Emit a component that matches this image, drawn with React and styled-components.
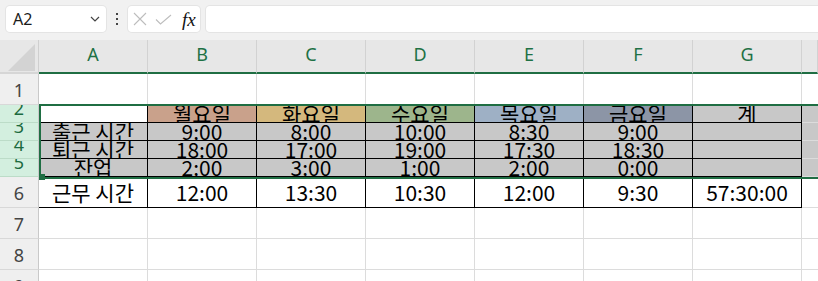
import React from 'react';
import styled, { createGlobalStyle } from 'styled-components';

const GlobalStyle = createGlobalStyle`
  html, body { margin: 0; padding: 0; background: #fff; overflow: hidden; }
  body { font-family: "Noto Sans", "Noto Sans CJK KR", sans-serif; }
`;

const Page = styled.div`
  width: 818px;
  height: 281px;
  overflow: hidden;
  background: #fff;
`;

const Toolbar = styled.div`
  height: 40px;
  box-sizing: border-box;
  display: flex;
  align-items: flex-start;
  padding: 6px 0 0 6px;
  background: #f1f1f1;
`;

const Box = styled.div`
  height: 26px;
  box-sizing: border-box;
  background: #fff;
  border-radius: 4px;
  box-shadow: 0 0 0 1px #e4e4e4;
  display: flex;
  align-items: center;
`;

const NameBox = styled(Box)`
  width: 100px;
  padding: 0 6px 0 7px;
  justify-content: space-between;
  font-size: 16px;
  color: #1b1b1b;
`;

const Dots = styled.div`
  width: 22px;
  height: 26px;
  display: flex;
  flex-direction: column;
  align-items: center;
  justify-content: center;
  gap: 3px;
  & > i {
    display: block;
    width: 2px;
    height: 2px;
    background: #444;
  }
`;

const FxGroup = styled(Box)`
  width: 72px;
  padding: 0 0 0 5px;
  gap: 8px;
`;

const Fx = styled.span`
  font-family: "Liberation Serif", serif;
  font-style: italic;
  font-size: 19px;
  color: #111;
  margin-left: 2px;
  line-height: 1;
`;

const FormulaInput = styled(Box)`
  flex: 1;
  margin-left: 6px;
  margin-right: -8px;
`;

const SheetWrap = styled.div`
  position: relative;
`;

const Grid = styled.div`
  display: grid;
  grid-template-columns: 39px repeat(7, 109px) 16px;
  grid-template-rows: 34px 31px 18px 18px 18px 18px 31px 31px 31px 31px;
`;

const Corner = styled.div`
  position: relative;
  background: #e7e7e7;
  border-right: 1px solid #cfcfcf;
  border-bottom: 2px solid #d6d6d6;
  box-sizing: border-box;
  &::after {
    content: "";
    position: absolute;
    right: 3px;
    bottom: 1px;
    width: 0;
    height: 0;
    border-left: 27px solid transparent;
    border-bottom: 27px solid #d3d3d3;
  }
`;

const ColHeader = styled.div`
  box-sizing: border-box;
  background: #e7e7e7;
  border-right: 1px solid #d2d2d2;
  border-bottom: 2px solid #1f6e43;
  color: #1e7145;
  font-size: 18px;
  display: flex;
  align-items: center;
  justify-content: center;
  padding-bottom: 4px;
`;

const RowHeader = styled.div`
  box-sizing: border-box;
  background: ${(p) => (p.$sel ? '#d3efdf' : '#efefef')};
  color: ${(p) => (p.$sel ? '#1c6b40' : '#444')};
  border-right: 1px solid #c9c9c9;
  border-bottom: 1px solid ${(p) => (p.$sel ? '#bcdcc8' : '#d8d8d8')};
  display: flex;
  align-items: flex-end;
  justify-content: center;
  overflow: hidden;
  & > span {
    display: block;
    height: 27px;
    line-height: 27px;
    font-size: 18px;
    flex: none;
  }
`;

const Cell = styled.div`
  box-sizing: border-box;
  background: ${(p) => p.$fill || '#fff'};
  border-right: ${(p) => (p.$noRight ? 'none' : `1px solid ${p.$r || '#dcdcdc'}`)};
  border-bottom: 1px solid ${(p) => p.$b || '#dcdcdc'};
  display: flex;
  align-items: center;
  justify-content: center;
  overflow: hidden;
  white-space: nowrap;
  font-family: "Noto Sans CJK KR", "Noto Sans", sans-serif;
  font-size: 21px;
  line-height: 1;
  color: #000;
`;

const Selection = styled.div`
  position: absolute;
  left: 39px;
  top: 64px;
  right: -4px;
  height: 75px;
  box-sizing: border-box;
  border: 2px solid #1f6e43;
  pointer-events: none;
`;

const Handle = styled.div`
  position: absolute;
  left: -2px;
  bottom: -3px;
  width: 6px;
  height: 6px;
  background: #1f6e43;
`;

const GRAY = '#c8c8c8';
const BLACK = '#000';
const cols = ['A', 'B', 'C', 'D', 'E', 'F', 'G'];
const days = [
  ['월요일', '#c9a18b'],
  ['화요일', '#d4b87d'],
  ['수요일', '#9db58c'],
  ['목요일', '#9eb0c5'],
  ['금요일', '#8c95a6'],
];
const timeRows = [
  ['출근 시간', ['9:00', '8:00', '10:00', '8:30', '9:00']],
  ['퇴근 시간', ['18:00', '17:00', '19:00', '17:30', '18:30']],
  ['잔업', ['2:00', '3:00', '1:00', '2:00', '0:00']],
];
const totals = ['12:00', '13:30', '10:30', '12:00', '9:30', '57:30:00'];

function Chevron() {
  return (
    <svg width="10" height="6" viewBox="0 0 10 6">
      <path d="M1 1 L5 5 L9 1" fill="none" stroke="#444" strokeWidth="1.2" />
    </svg>
  );
}

function Cross() {
  return (
    <svg width="14" height="14" viewBox="0 0 14 14">
      <path d="M1 1 L13 13 M13 1 L1 13" fill="none" stroke="#bdbdbd" strokeWidth="1.1" />
    </svg>
  );
}

function Check() {
  return (
    <svg width="17" height="11" viewBox="0 0 17 11">
      <path d="M1 5.5 L5.5 10 L16 1" fill="none" stroke="#bdbdbd" strokeWidth="1.1" />
    </svg>
  );
}

export default function App() {
  return (
    <Page>
      <GlobalStyle />
      <Toolbar>
        <NameBox>
          <span>A2</span>
          <Chevron />
        </NameBox>
        <Dots>
          <i />
          <i />
          <i />
        </Dots>
        <FxGroup>
          <Cross />
          <Check />
          <Fx>fx</Fx>
        </FxGroup>
        <FormulaInput />
      </Toolbar>
      <SheetWrap>
        <Grid>
          <Corner />
          {cols.map((c) => (
            <ColHeader key={c}>{c}</ColHeader>
          ))}
          <ColHeader />

          {/* Row 1 */}
          <RowHeader><span>1</span></RowHeader>
          {cols.map((c, i) => (
            <Cell key={'r1' + c} $b={i > 0 ? BLACK : undefined} />
          ))}
          <Cell $noRight />

          {/* Row 2 */}
          <RowHeader $sel><span>2</span></RowHeader>
          <Cell $r={BLACK} $b={BLACK} />
          {days.map(([d, col]) => (
            <Cell key={d} $fill={col} $r={BLACK} $b={BLACK}>{d}</Cell>
          ))}
          <Cell $fill={GRAY} $r={BLACK} $b={BLACK}>계</Cell>
          <Cell $fill={GRAY} $noRight />

          {/* Rows 3-5 */}
          {timeRows.map(([label, vals], ri) => (
            <React.Fragment key={label}>
              <RowHeader $sel><span>{ri + 3}</span></RowHeader>
              <Cell $fill={GRAY} $r={BLACK} $b={BLACK}>{label}</Cell>
              {vals.map((v, vi) => (
                <Cell key={vi} $fill={GRAY} $r={BLACK} $b={BLACK}>{v}</Cell>
              ))}
              <Cell $fill={GRAY} $r={BLACK} $b={BLACK} />
              <Cell $fill={GRAY} $noRight />
            </React.Fragment>
          ))}

          {/* Row 6 */}
          <RowHeader><span>6</span></RowHeader>
          <Cell $r={BLACK} $b={BLACK}>근무 시간</Cell>
          {totals.map((t, i) => (
            <Cell key={i} $r={BLACK} $b={BLACK}>{t}</Cell>
          ))}
          <Cell $noRight />

          {/* Rows 7-9 */}
          {[7, 8, 9].map((n) => (
            <React.Fragment key={n}>
              <RowHeader><span>{n}</span></RowHeader>
              {cols.map((c) => (
                <Cell key={c} />
              ))}
              <Cell $noRight />
            </React.Fragment>
          ))}
        </Grid>
        <Selection>
          <Handle />
        </Selection>
      </SheetWrap>
    </Page>
  );
}
